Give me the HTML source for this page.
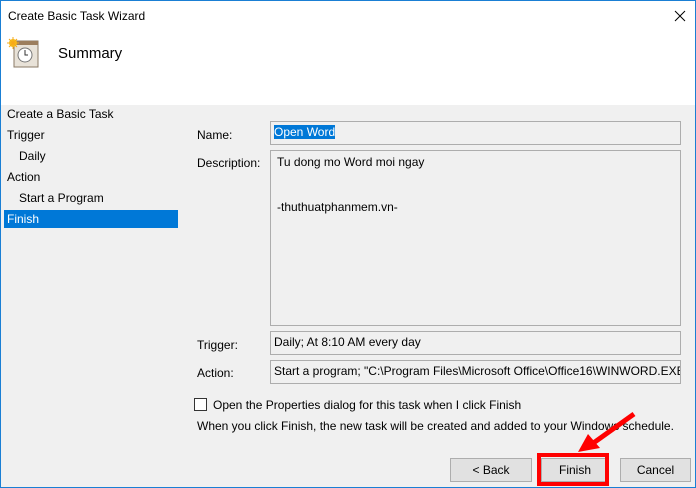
<!DOCTYPE html>
<html><head><style>
body{margin:0;width:696px;height:488px;overflow:hidden;font-family:"Liberation Sans",sans-serif;font-size:12px;color:#000;}
.win{position:absolute;left:0;top:0;width:694px;height:486px;border:1px solid #1a7fd4;background:#f0f0f0;}
.hdr{position:absolute;left:0;top:0;width:694px;height:104px;background:#fff;}
.a{position:absolute;white-space:nowrap;}
.box{position:absolute;border:1px solid #adadad;background:#f0f0f0;box-sizing:border-box;padding:3px 3px;}
.btn{position:absolute;border:1px solid #adadad;background:#e1e1e1;box-sizing:border-box;text-align:center;line-height:22px;}
</style></head><body>
<div class="win">
<div class="hdr"></div>
<div class="a" style="left:7px;top:8px;">Create Basic Task Wizard</div>
<svg class="a" style="left:672px;top:8px" width="14" height="14"><path d="M2 2L12 12M12 2L2 12" stroke="#000" stroke-width="1"/></svg>
<svg class="a" style="left:6px;top:36px" width="34" height="34">
<rect x="7" y="4" width="24" height="26" fill="#e8e2d8" stroke="#8a7a66"/>
<rect x="7" y="4" width="24" height="4" fill="#9c7e5e"/>
<circle cx="18" cy="18" r="7" fill="#fff" stroke="#777"/>
<path d="M18 13V18H21" stroke="#333" fill="none"/>
<circle cx="6" cy="6" r="4" fill="#f7c21a"/>
<path d="M6 0V12M0 6H12M2 2L10 10M10 2L2 10" stroke="#f7a81a"/>
</svg>
<div class="a" style="left:57px;top:44px;font-size:15px;">Summary</div>
<div class="a" style="left:6px;top:106px;">Create a Basic Task</div>
<div class="a" style="left:6px;top:127px;">Trigger</div>
<div class="a" style="left:18px;top:148px;">Daily</div>
<div class="a" style="left:6px;top:169px;">Action</div>
<div class="a" style="left:18px;top:190px;">Start a Program</div>
<div class="a" style="left:3px;top:209px;width:174px;height:18px;background:#0078d7;color:#fff;line-height:18px;padding-left:3px;box-sizing:border-box;">Finish</div>
<div class="a" style="left:196px;top:127px;">Name:</div>
<div class="box" style="left:269px;top:120px;width:411px;height:24px;"><span style="background:#0078d7;color:#fff;">Open Word</span></div>
<div class="a" style="left:196px;top:155px;">Description:</div>
<div class="box" style="left:269px;top:149px;width:411px;height:176px;padding:4px 6px;line-height:15px;">Tu dong mo Word moi ngay<br><br><br>-thuthuatphanmem.vn-</div>
<div class="a" style="left:196px;top:337px;">Trigger:</div>
<div class="box" style="left:269px;top:330px;width:411px;height:24px;">Daily; At 8:10 AM every day</div>
<div class="a" style="left:196px;top:365px;">Action:</div>
<div class="box" style="left:269px;top:359px;width:411px;height:24px;overflow:hidden;white-space:nowrap;">Start a program; "C:\Program Files\Microsoft Office\Office16\WINWORD.EXE"</div>
<div class="a" style="left:193px;top:397px;width:13px;height:13px;border:1px solid #333;background:#fff;box-sizing:border-box;"></div>
<div class="a" style="left:212px;top:397px;">Open the Properties dialog for this task when I click Finish</div>
<div class="a" style="left:196px;top:418px;">When you click Finish, the new task will be created and added to your Windows schedule.</div>
<div class="btn" style="left:449px;top:457px;width:82px;height:24px;">&lt; Back</div>
<div class="btn" style="left:540px;top:457px;width:68px;height:24px;">Finish</div>
<div class="btn" style="left:619px;top:457px;width:71px;height:24px;">Cancel</div>
</div>
<div class="a" style="left:537px;top:453px;width:72px;height:33px;border:4px solid #f00;box-sizing:border-box;"></div>
<svg class="a" style="left:570px;top:408px" width="70" height="50"><path d="M64 6L22 36" stroke="#f00" stroke-width="5"/><path d="M8 44L18 26L30 40Z" fill="#f00"/></svg>
</body></html>
